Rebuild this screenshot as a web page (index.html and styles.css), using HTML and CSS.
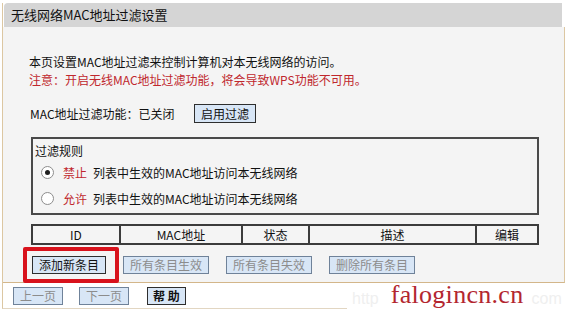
FILE: index.html
```html
<!DOCTYPE html>
<html lang="zh-CN">
<head>
     <meta charset="UTF-8">
     <meta name="viewport" content="width=device-width, initial-scale=1.0">
     <title>无线网络MAC地址过滤设置</title>
     <link rel="stylesheet" href="styles.css">
</head>
<body>
     <div class="frame">
          <div class="title">无线网络MAC地址过滤设置</div>
          <div class="panel">
               <p class="intro">本页设置MAC地址过滤来控制计算机对本无线网络的访问。</p>
               <p class="intro warn">注意：开启无线MAC地址过滤功能，将会导致WPS功能不可用。</p>

               <div class="status-row">
                    <span class="status-label">MAC地址过滤功能：已关闭</span>
                    <button class="btn">启用过滤</button>
               </div>

               <!-- 过滤规则 -->
               <div class="rules">
                    <div class="rules-title">过滤规则</div>
                    <div class="rule"><span class="radio checked"></span><span class="rule-key">禁止</span>列表中生效的MAC地址访问本无线网络</div>
                    <div class="rule"><span class="radio"></span><span class="rule-key">允许</span>列表中生效的MAC地址访问本无线网络</div>
               </div>

               <table class="entries">
                    <tr>
                         <th class="c-id">ID</th>
                         <th class="c-mac">MAC地址</th>
                         <th class="c-state">状态</th>
                         <th class="c-desc">描述</th>
                         <th class="c-edit">编辑</th>
                    </tr>
               </table>

               <div class="actions">
                    <span class="mark"><button class="btn">添加新条目</button></span>
                    <button class="btn off">所有条目生效</button>
                    <button class="btn off">所有条目失效</button>
                    <button class="btn off">删除所有条目</button>
               </div>
          </div>
          <div class="nav">
               <button class="btn off">上一页</button>
               <button class="btn off">下一页</button>
               <button class="btn help">帮 助</button>
          </div>
     </div>

     <div class="watermark">
          <span class="ghost">http</span>
          <span class="brand">falogincn.cn</span>
          <span class="ghost">com</span>
     </div>
</body>
</html>
```

FILE: styles.css
```css
body{
     margin: 0;
     background: #ffffff;
     font-family: "Noto Sans CJK SC", "Noto Sans", sans-serif;
     font-size: 12px;
     color: #111111;
}
.frame{
     width: 562px;
     margin: 3px 0 0 2px;
     border-left: 1px solid #dcc7a2;
     border-bottom: 1px solid #e2d6c2;
}
.title{
     height: 24px;
     line-height: 24px;
     margin: 0 3px 0 1px;
     padding-left: 7px;
     background: #d5d5d5;
     border-top-left-radius: 4px;
     font-size: 13px;
}
.panel{
     background: #f4f4f4;
     border-right: 1px solid #dcc7a2;
     border-bottom: 1px solid #d3b68a;
     padding: 26px 0 8px 26px;
}
.intro{
     margin: 0;
     line-height: 18px;
}
.warn{
     color: #c0272d;
}
.status-row{
     display: flex;
     align-items: center;
     margin-top: 15px;
     padding-left: 1px;
}
.status-label{
     width: 164px;
}
.btn{
     height: 18px;
     padding: 0 6px;
     border: 1px solid #2e2e2e;
     background: #d8e6f6;
     font-family: "Noto Sans CJK SC", sans-serif;
     font-size: 12px;
     line-height: 16px;
     color: #111111;
}
.status-row .btn{
     height: 19px;
}
.btn.off{
     color: #8c8c8c;
     border-color: #6f8299;
}
.help{
     padding: 0 5px;
}
.rules{
     box-sizing: border-box;
     width: 508px;
     margin: 14px 0 0 2px;
     border: 2px solid #4a4a4a;
     padding: 4px 0 2px 2px;
}
.rules-title{
     line-height: 16px;
}
.rule{
     display: flex;
     align-items: center;
     height: 26px;
}
.radio{
     box-sizing: border-box;
     width: 13px;
     height: 13px;
     margin: 0 9px 0 6px;
     border: 1px solid #8d8d8d;
     border-radius: 50%;
     background: #ffffff;
     display: flex;
     align-items: center;
     justify-content: center;
}
.radio.checked::after{
     content: "";
     width: 5px;
     height: 5px;
     border-radius: 50%;
     background: #1e1e1e;
}
.rule-key{
     color: #c0272d;
     margin-right: 6px;
}
.entries{
     width: 508px;
     margin: 9px 0 0 2px;
     border-collapse: collapse;
     border: 2px solid #3c3c3c;
}
.entries th{
     height: 17px;
     padding: 0;
     border: 2px solid #3c3c3c;
     font-weight: normal;
     line-height: 17px;
     text-align: center;
}
.c-id{ width: 86px; }
.c-mac{ width: 121px; }
.c-state{ width: 65px; }
.c-desc{ width: 166px; }
.c-edit{ width: 60px; }
.actions{
     display: flex;
     gap: 17px;
     margin-top: 11px;
     padding-left: 3px;
}
.mark{
     position: relative;
     display: flex;
}
.mark::after{
     content: "";
     position: absolute;
     left: -9px;
     top: -9px;
     right: -13px;
     bottom: -9px;
     border: 4px solid #d8121c;
     border-radius: 2px;
}
.nav{
     display: flex;
     gap: 16px;
     margin-top: 4px;
     padding: 0 0 3px 10px;
}
.nav .help{
     margin-left: 2px;
     font-weight: bold;
}
.watermark{
     position: absolute;
     left: 347px;
     top: 288px;
     width: 221px;
     height: 23px;
     background: #ffffff;
     display: flex;
     align-items: flex-start;
     padding-left: 5px;
     box-sizing: border-box;
}
.ghost{
     margin-top: 2px;
     font-family: "Liberation Sans", sans-serif;
     font-size: 16px;
     line-height: 18px;
     color: #efefef;
}
.brand{
     margin: -4px 8px 0 12px;
     font-family: "Liberation Serif", serif;
     font-size: 26px;
     line-height: 21px;
     letter-spacing: 0.3px;
     color: #b3262f;
}
```
